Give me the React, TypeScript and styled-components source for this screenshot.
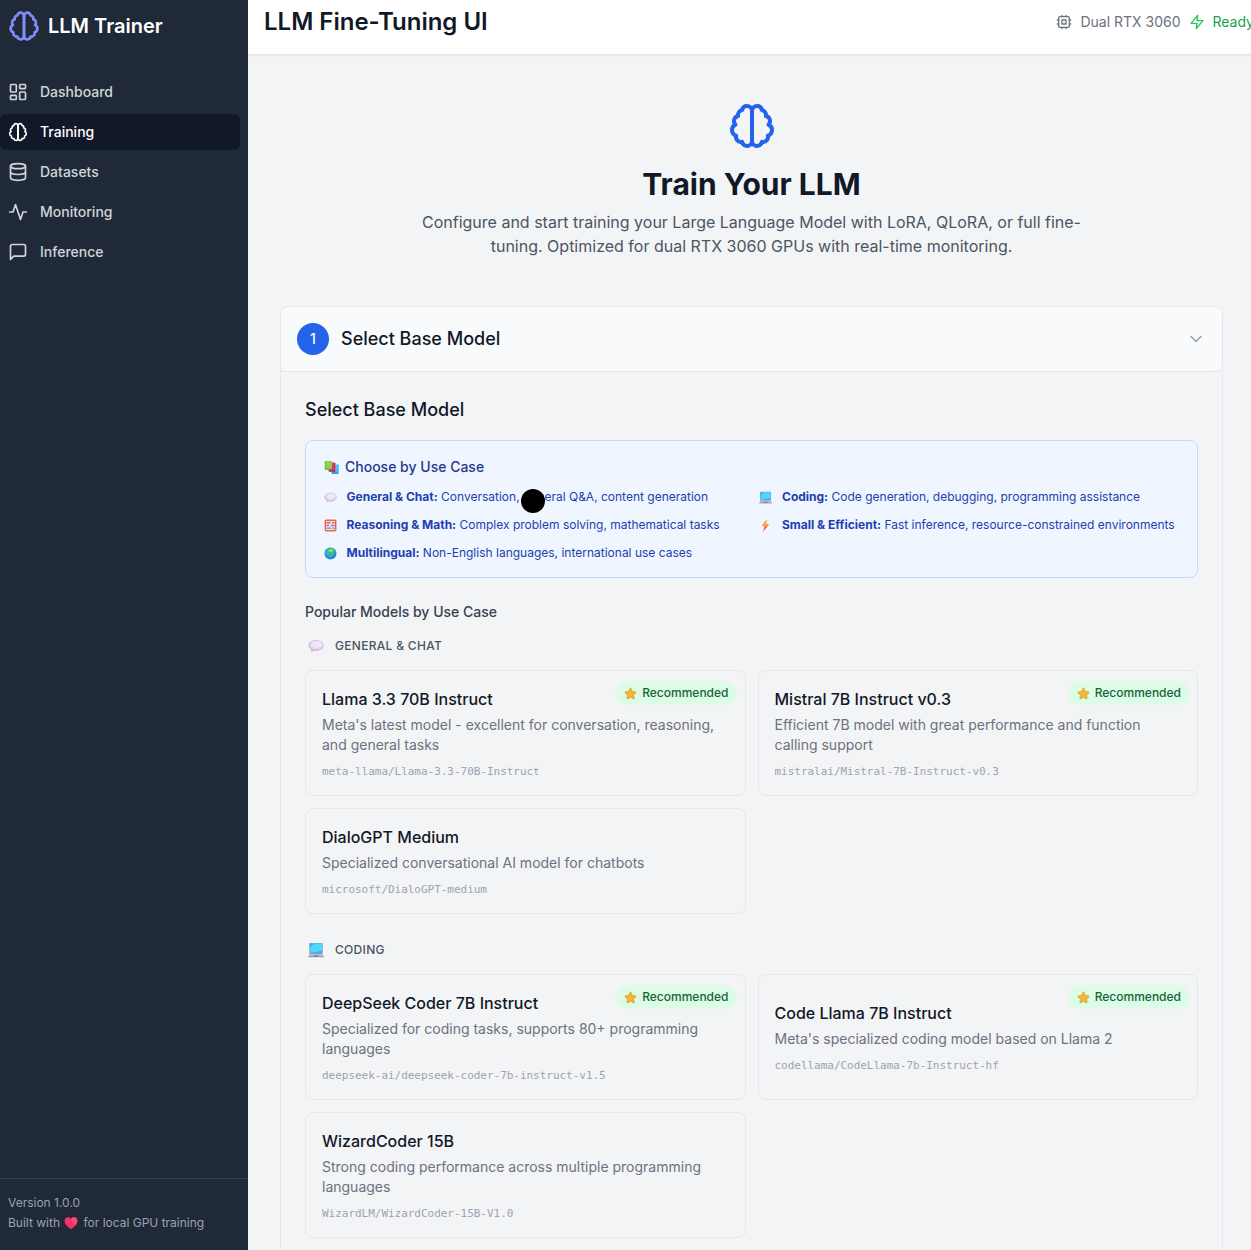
import React from 'react';
import styled, { createGlobalStyle, css } from 'styled-components';

const GlobalStyle = createGlobalStyle`
  *, *::before, *::after { box-sizing: border-box; }
  html, body { margin: 0; height: 1250px; overflow: hidden; }
  body {
    background: #f3f4f6;
    color: #111827;
    font-family: Inter, "Liberation Sans", sans-serif;
    font-size: 16px;
    line-height: 24px;
  }
  h1, h2, h3, h4, h5, p { margin: 0; font-weight: 500; }
  svg { display: block; flex-shrink: 0; }
`;

/* ---------- Line icons ---------- */

type IconProps = { size?: number; color?: string };

const Line = ({ size = 20, color = 'currentColor', children }: IconProps & { children: React.ReactNode }) => (
  <svg width={size} height={size} viewBox="0 0 24 24" fill="none" stroke={color} strokeWidth={2} strokeLinecap="round" strokeLinejoin="round">
    {children}
  </svg>
);

const Brain = (p: IconProps) => (
  <Line {...p}>
    <path d="M9.5 2A2.5 2.5 0 0 1 12 4.5v15a2.5 2.5 0 0 1-4.96.44 2.5 2.5 0 0 1-2.96-3.08 3 3 0 0 1-.34-5.58 2.5 2.5 0 0 1 1.32-4.24 2.5 2.5 0 0 1 1.98-3A2.5 2.5 0 0 1 9.5 2Z" />
    <path d="M14.5 2A2.5 2.5 0 0 0 12 4.5v15a2.5 2.5 0 0 0 4.96.44 2.5 2.5 0 0 0 2.96-3.08 3 3 0 0 0 .34-5.58 2.5 2.5 0 0 0-1.32-4.24 2.5 2.5 0 0 0-1.98-3A2.5 2.5 0 0 0 14.5 2Z" />
  </Line>
);
const Dashboard = () => (
  <Line>
    <rect x="3" y="3" width="7" height="9" rx="1" />
    <rect x="14" y="3" width="7" height="5" rx="1" />
    <rect x="14" y="12" width="7" height="9" rx="1" />
    <rect x="3" y="16" width="7" height="5" rx="1" />
  </Line>
);
const Database = () => (
  <Line>
    <ellipse cx="12" cy="5" rx="9" ry="3" />
    <path d="M3 5V19A9 3 0 0 0 21 19V5" />
    <path d="M3 12A9 3 0 0 0 21 12" />
  </Line>
);
const Activity = () => (
  <Line>
    <path d="M22 12h-4l-3 9L9 3l-3 9H2" />
  </Line>
);
const Message = () => (
  <Line>
    <path d="M21 15a2 2 0 0 1-2 2H7l-4 4V5a2 2 0 0 1 2-2h14a2 2 0 0 1 2 2z" />
  </Line>
);
const Cpu = (p: IconProps) => (
  <Line {...p}>
    <rect x="4" y="4" width="16" height="16" rx="2" />
    <rect x="9" y="9" width="6" height="6" />
    <path d="M15 2v2M15 20v2M2 15h2M2 9h2M20 15h2M20 9h2M9 2v2M9 20v2" />
  </Line>
);
const Zap = (p: IconProps) => (
  <Line {...p}>
    <polygon points="13 2 3 14 12 14 11 22 21 10 12 10 13 2" />
  </Line>
);
const Chevron = (p: IconProps) => (
  <Line {...p}>
    <path d="m6 9 6 6 6-6" />
  </Line>
);

/* ---------- Colour glyphs ---------- */

type GlyphName = 'books' | 'chat' | 'abacus' | 'globe' | 'laptop' | 'bolt' | 'star' | 'heart';

const glyphs: Record<GlyphName, React.ReactNode> = {
  books: (
    <>
      <rect x="8" y="5" width="7.500" height="9.800" rx=".5" fill="#4a8fe0" />
      <rect x="11" y="5" width="4.500" height="7.500" fill="#45c3f5" />
      <rect x="5" y="3" width="7" height="9.500" rx=".5" fill="#c41c5c" />
      <rect x="8" y="3" width="3.500" height="8" fill="#ee3158" />
      <rect x=".8" y="1" width="7.700" height="9.500" rx=".5" fill="#5fae48" />
      <rect x="1.600" y="1" width="6.900" height="8" fill="#8fd14f" />
    </>
  ),
  chat: (
    <>
      <path d="M8 2c4 0 7.500 2.300 7.500 5.500S12 13 8 13c-.9 0-1.800-.1-2.500-.3L3 14.400l.3-2.900C1.600 10.500.5 9.200.5 7.500.5 4.300 4 2 8 2z" fill="#c9b5e0" />
      <ellipse cx="8.200" cy="7.200" rx="6.700" ry="4.700" fill="#e3d7ee" />
      <ellipse cx="8.800" cy="6.500" rx="5" ry="3.200" fill="#f0e9f4" />
    </>
  ),
  abacus: (
    <>
      <rect x=".7" y=".7" width="14.600" height="14.600" rx="2" fill="#f0653f" />
      <rect x="2.500" y="2.500" width="11" height="11" fill="#f9e4e4" />
      <path d="M3 4.500h5M10 4.500h3" stroke="#e8596c" strokeWidth="1.800" />
      <path d="M3 8h3.500M8.500 8H13" stroke="#8f78da" strokeWidth="1.800" />
      <path d="M3 11.300h6" stroke="#3fb5dc" strokeWidth="1.800" />
      <path d="M10.500 11.300H13" stroke="#4b8be0" strokeWidth="1.800" />
    </>
  ),
  globe: (
    <>
      <circle cx="8" cy="8" r="7.400" fill="#2388dc" />
      <circle cx="7" cy="6.500" r="5.700" fill="#35a8ee" />
      <path d="M5 2.500l4-1.500 3.500 1.500 2 3-2 1-1 3-2.500 3.500-1.500-3.500-3-1L2.500 6z" fill="#42bc78" />
      <path d="M8 2l3 1 .5 2-3.500 1.500-3-1.500z" fill="#78df8b" />
    </>
  ),
  laptop: (
    <>
      <rect x="1.300" y="1" width="13.400" height="11" rx=".8" fill="#8b9ab8" />
      <path d="M2 1.600h12v9.600H2z" fill="#32b5ee" />
      <path d="M6 1.600h8v7.200L2 11V6z" fill="#4ed6ff" />
      <path d="M1.500 12h13l1.200 2.700H.3z" fill="#c4b8cc" />
      <path d="M.3 14.200h15.400v1H.3z" fill="#9a8ba8" />
      <path d="M5.500 13.300h5v1.300h-5z" fill="#82758d" />
    </>
  ),
  bolt: (
    <>
      <path d="M9.600.5 3.500 8.300l3.200 1-1.700 6.200 7.500-8.700-3.700-.9z" fill="#ff8446" />
      <path d="m9.600.5-6.100 7.800 3.200.6 4.500-1.600-2.400-1.400z" fill="#ffa451" />
      <path d="m6.700 10-1.700 5.500 4.500-5.200z" fill="#f05a58" />
    </>
  ),
  star: (
    <>
      <path d="M8 .8c.6 0 1 .5 1.300 1.200l1.300 2.900 3.400.5c1.300.2 1.700 1.300.8 2.200l-2.500 2.500.6 3.500c.2 1.300-.8 1.900-1.900 1.300L8 13.300l-3 1.600c-1.100.6-2.100 0-1.900-1.300l.6-3.500-2.500-2.500c-.9-.9-.5-2 .8-2.200l3.400-.5L6.700 2C7 1.300 7.400.8 8 .8z" fill="#e5a92f" />
      <path d="M8 1.500 9.600 6l4.900 1-3.800 2.700.3 4-3.500-2-4 1L5 9 2.500 6.500 6.600 5.800z" fill="#ebbc3c" />
    </>
  ),
  heart: (
    <>
      <path d="M8 15C4.500 12.800.7 9.500.7 5.700.7 3.300 2.400 1.500 4.600 1.500 6.200 1.500 7.400 2.300 8 3.200c.6-.9 1.800-1.700 3.400-1.700 2.200 0 3.900 1.800 3.900 4.200C15.300 9.500 11.500 12.800 8 15z" fill="#f5306e" />
      <path d="M8 3.200c.6-.9 1.800-1.700 3.400-1.700 2.200 0 3.900 1.800 3.900 4.200 0 1.400-.5 2.700-1.400 3.900C10.500 9.500 8.500 7 8 3.200z" fill="#fb4a66" />
    </>
  ),
};

const Glyph = ({ name, size }: { name: GlyphName; size: number }) => (
  <svg width={size} height={size} viewBox="0 0 16 16">
    {glyphs[name]}
  </svg>
);

/* ---------- Shell ---------- */

const Shell = styled.div`
  display: flex;
  width: 1255px;
  height: 1250px;
  overflow: hidden;
`;

const Sidebar = styled.aside`
  flex: 0 0 248px;
  display: flex;
  flex-direction: column;
  background: #1f2937;
`;

const Brand = styled.div`
  display: flex;
  align-items: center;
  gap: 8px;
  height: 52px;
  padding-left: 8px;
  color: #fff;
  font-size: 20px;
  font-weight: 600;
  line-height: 28px;
`;

const Nav = styled.nav`
  flex: 1;
  display: flex;
  flex-direction: column;
  gap: 4px;
  padding: 22px 8px 0 0;
`;

const NavItem = styled.a<{ $active?: boolean }>`
  display: flex;
  align-items: center;
  gap: 12px;
  height: 36px;
  padding-left: 8px;
  border-radius: 6px;
  font-size: 14px;
  font-weight: 500;
  line-height: 20px;
  color: ${(p) => (p.$active ? '#fff' : '#d1d5db')};
  ${(p) => p.$active && css`background: #111827;`}
`;

const SideFooter = styled.footer`
  display: flex;
  flex-direction: column;
  gap: 4px;
  height: 72px;
  padding: 16px 8px 0;
  border-top: 1px solid #374151;
  color: #9ca3af;
  font-size: 12px;
  line-height: 16px;
`;

const FooterLine = styled.p`
  display: flex;
  align-items: center;
  font-weight: 400;
  svg { margin: 0 5px 0 4.500px; }
`;

const Column = styled.div`
  flex: 1;
  min-width: 0;
`;

const TopBar = styled.header`
  display: flex;
  align-items: center;
  justify-content: space-between;
  height: 55px;
  padding: 0 1px 10px 16px;
  background: #fff;
  border-bottom: 1px solid #e5e7eb;
  box-shadow: 0 1px 2px rgba(0, 0, 0, 0.05);
`;

const PageTitle = styled.h1`
  font-size: 24px;
  font-weight: 600;
  line-height: 32px;
`;

const Status = styled.div`
  display: flex;
  align-items: center;
  gap: 8px;
  font-size: 14px;
  line-height: 20px;
  color: #6b7280;
`;

const Ready = styled.span`
  color: #16a34a;
`;

const Content = styled.main`
  padding: 47px 32px 0;
`;

const Hero = styled.section`
  display: flex;
  flex-direction: column;
  align-items: center;
  height: 204px;
  text-align: center;
`;

const HeroTitle = styled.h2`
  margin: 16px 0 8px;
  font-size: 30px;
  font-weight: 700;
  line-height: 36px;
`;

const HeroText = styled.p`
  width: 672px;
  color: #4b5563;
  font-weight: 400;
`;

/* ---------- Step panel ---------- */

const Panel = styled.section`
  height: 1000px;
  border: 1px solid #e5e7eb;
  border-radius: 8px;
`;

const PanelHeader = styled.div`
  display: flex;
  align-items: center;
  gap: 12px;
  height: 64px;
  padding: 0 16px;
  border-radius: 8px;
  background: #f9fafb;
`;

const StepNumber = styled.span`
  display: flex;
  align-items: center;
  justify-content: center;
  width: 32px;
  height: 32px;
  border-radius: 50%;
  background: #2563eb;
  color: #fff;
  font-size: 14px;
  font-weight: 500;
`;

const Heading = styled.h3<{ $grow?: boolean }>`
  ${(p) => p.$grow && css`flex: 1;`}
  font-size: 18px;
  line-height: 28px;
`;

const PanelBody = styled.div`
  padding: 24px;
  border-top: 1px solid #e5e7eb;
`;

const UseCases = styled.div`
  height: 138px;
  margin: 16px 0 24px;
  padding: 16px;
  border: 1px solid #bfdbfe;
  border-radius: 8px;
  background: #eff6ff;
`;

const UseCasesTitle = styled.h4`
  display: flex;
  align-items: center;
  gap: 6px;
  padding-left: 2px;
  margin-bottom: 10px;
  color: #1e3a8a;
  font-size: 14px;
  line-height: 20px;
`;

const UseCaseGrid = styled.div`
  display: grid;
  grid-template-columns: 1fr 1fr;
  gap: 8px 12px;
`;

const UseCase = styled.div`
  display: flex;
  align-items: center;
  gap: 10px;
  padding-left: 1.500px;
  color: #1e40af;
  font-size: 12px;
  line-height: 20px;
  white-space: nowrap;
`;

const SectionLabel = styled.h4`
  margin-bottom: 12px;
  color: #374151;
  font-size: 14px;
  line-height: 20px;
`;

const Group = styled.section`
  margin-bottom: 24px;
`;

const GroupTitle = styled.h5`
  display: flex;
  align-items: center;
  gap: 11px;
  height: 24px;
  margin-bottom: 12px;
  padding-left: 3px;
  color: #4b5563;
  font-size: 12px;
  letter-spacing: 0.3px;
  text-transform: uppercase;
`;

const CardGrid = styled.div`
  display: grid;
  grid-template-columns: 1fr 1fr;
  gap: 12px;
`;

const Card = styled.article`
  position: relative;
  display: flex;
  flex-direction: column;
  justify-content: center;
  padding: 16px;
  border: 1px solid #e5e7eb;
  border-radius: 8px;
`;

const ModelName = styled.h4`
  font-size: 16px;
  line-height: 24px;
`;

const ModelText = styled.p`
  margin: 4px 0 8px;
  color: #6b7280;
  font-size: 14px;
  font-weight: 400;
  line-height: 20px;
`;

const ModelId = styled.code`
  height: 16px;
  color: #9ca3af;
  font-family: "DejaVu Sans Mono", "Liberation Mono", monospace;
  font-size: 11px;
  letter-spacing: -0.025px;
  line-height: 18px;
`;

const Badge = styled.span`
  position: absolute;
  top: 10px;
  right: 8px;
  display: flex;
  align-items: center;
  gap: 5px;
  height: 24px;
  padding: 0 8px 0 9px;
  border-radius: 12px;
  background: #dcfce7;
  color: #166534;
  font-size: 12px;
  font-weight: 500;
  line-height: 16px;
`;

const PointerDot = styled.span`
  position: absolute;
  left: 521px;
  top: 488.500px;
  width: 24px;
  height: 24px;
  border-radius: 50%;
  background: #000;
`;

/* ---------- Data ---------- */

const navItems = [
  { label: 'Dashboard', icon: <Dashboard /> },
  { label: 'Training', icon: <Brain />, active: true },
  { label: 'Datasets', icon: <Database /> },
  { label: 'Monitoring', icon: <Activity /> },
  { label: 'Inference', icon: <Message /> },
];

const useCases: { icon: GlyphName; name: string; text: string }[] = [
  { icon: 'chat', name: 'General & Chat:', text: 'Conversation, general Q&A, content generation' },
  { icon: 'laptop', name: 'Coding:', text: 'Code generation, debugging, programming assistance' },
  { icon: 'abacus', name: 'Reasoning & Math:', text: 'Complex problem solving, mathematical tasks' },
  { icon: 'bolt', name: 'Small & Efficient:', text: 'Fast inference, resource-constrained environments' },
  { icon: 'globe', name: 'Multilingual:', text: 'Non-English languages, international use cases' },
];

type Model = { name: string; text: string; id: string; recommended?: boolean };

const groups: { title: string; icon: GlyphName; models: Model[] }[] = [
  {
    title: 'General & Chat',
    icon: 'chat',
    models: [
      { name: 'Llama 3.3 70B Instruct', text: "Meta's latest model - excellent for conversation, reasoning, and general tasks", id: 'meta-llama/Llama-3.3-70B-Instruct', recommended: true },
      { name: 'Mistral 7B Instruct v0.3', text: 'Efficient 7B model with great performance and function calling support', id: 'mistralai/Mistral-7B-Instruct-v0.3', recommended: true },
      { name: 'DialoGPT Medium', text: 'Specialized conversational AI model for chatbots', id: 'microsoft/DialoGPT-medium' },
    ],
  },
  {
    title: 'Coding',
    icon: 'laptop',
    models: [
      { name: 'DeepSeek Coder 7B Instruct', text: 'Specialized for coding tasks, supports 80+ programming languages', id: 'deepseek-ai/deepseek-coder-7b-instruct-v1.5', recommended: true },
      { name: 'Code Llama 7B Instruct', text: "Meta's specialized coding model based on Llama 2", id: 'codellama/CodeLlama-7b-Instruct-hf', recommended: true },
      { name: 'WizardCoder 15B', text: 'Strong coding performance across multiple programming languages', id: 'WizardLM/WizardCoder-15B-V1.0' },
    ],
  },
];

export default function App() {
  return (
    <>
      <GlobalStyle />
      <Shell>
        <Sidebar>
          <Brand>
            <Brain size={32} color="#818cf8" />
            LLM Trainer
          </Brand>
          <Nav>
            {navItems.map((item) => (
              <NavItem key={item.label} $active={item.active}>
                {item.icon}
                {item.label}
              </NavItem>
            ))}
          </Nav>
          <SideFooter>
            <FooterLine>Version 1.0.0</FooterLine>
            <FooterLine>
              Built with <Glyph name="heart" size={14} /> for local GPU training
            </FooterLine>
          </SideFooter>
        </Sidebar>
        <Column>
          <TopBar>
            <PageTitle>LLM Fine-Tuning UI</PageTitle>
            <Status>
              <Cpu size={16} />
              <span>Dual RTX 3060</span>
              <Zap size={16} color="#22c55e" />
              <Ready>Ready</Ready>
            </Status>
          </TopBar>
          <Content>
            <Hero>
              <Brain size={48} color="#2563eb" />
              <HeroTitle>Train Your LLM</HeroTitle>
              <HeroText>
                Configure and start training your Large Language Model with LoRA, QLoRA, or full fine-tuning. Optimized for dual RTX 3060 GPUs
                with real-time monitoring.
              </HeroText>
            </Hero>
            <Panel>
              <PanelHeader>
                <StepNumber>1</StepNumber>
                <Heading $grow>Select Base Model</Heading>
                <Chevron size={20} color="#9ca3af" />
              </PanelHeader>
              <PanelBody>
                <Heading>Select Base Model</Heading>
                <UseCases>
                  <UseCasesTitle>
                    <Glyph name="books" size={15} />
                    Choose by Use Case
                  </UseCasesTitle>
                  <UseCaseGrid>
                    {useCases.map((u) => (
                      <UseCase key={u.name}>
                        <Glyph name={u.icon} size={13} />
                        <span>
                          <b>{u.name}</b> {u.text}
                        </span>
                      </UseCase>
                    ))}
                  </UseCaseGrid>
                </UseCases>
                <SectionLabel>Popular Models by Use Case</SectionLabel>
                {groups.map((g) => (
                  <Group key={g.title}>
                    <GroupTitle>
                      <Glyph name={g.icon} size={16} />
                      {g.title}
                    </GroupTitle>
                    <CardGrid>
                      {g.models.map((m) => (
                        <Card key={m.id}>
                          {m.recommended && (
                            <Badge>
                              <Glyph name="star" size={13} />
                              Recommended
                            </Badge>
                          )}
                          <ModelName>{m.name}</ModelName>
                          <ModelText>{m.text}</ModelText>
                          <ModelId>{m.id}</ModelId>
                        </Card>
                      ))}
                    </CardGrid>
                  </Group>
                ))}
              </PanelBody>
            </Panel>
          </Content>
        </Column>
      </Shell>
      <PointerDot />
    </>
  );
}
